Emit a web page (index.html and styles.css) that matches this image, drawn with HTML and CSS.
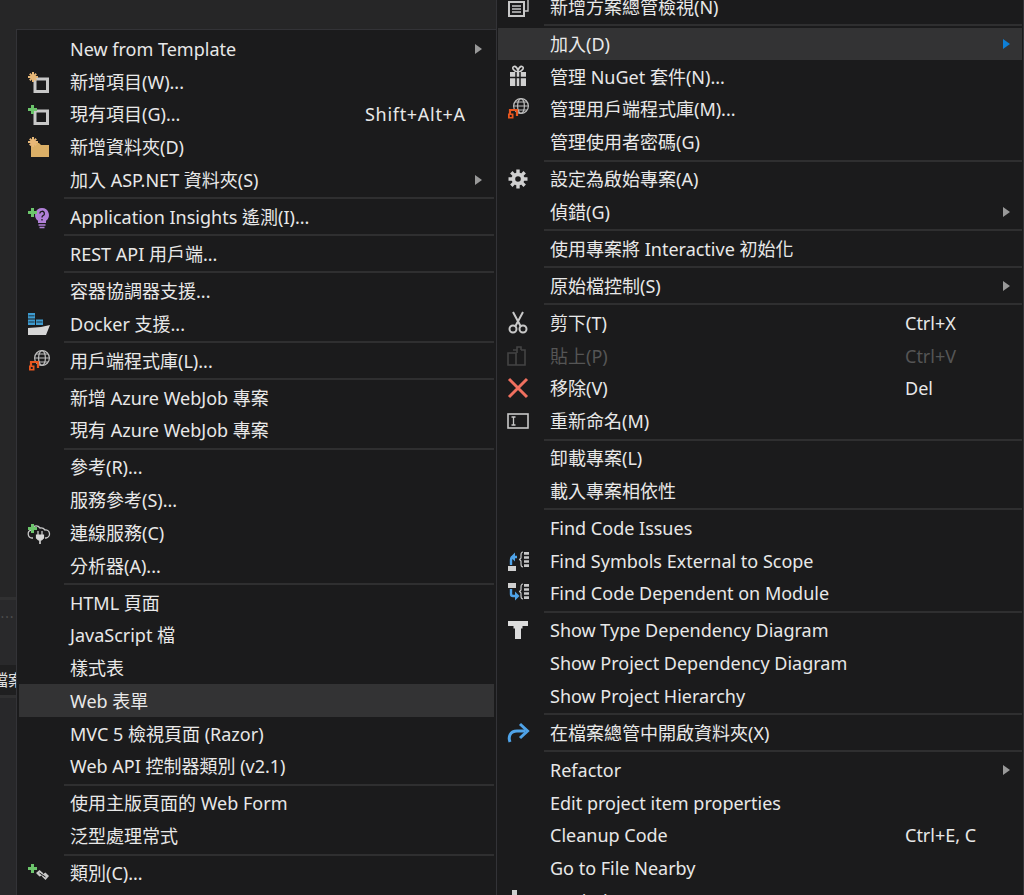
FILE: index.html
```html
<!DOCTYPE html>
<html lang="zh-Hant">
<head>
<meta charset="utf-8">
<title>Context menu</title>
<link rel="stylesheet" href="styles.css">
</head>
<body>
<svg class="defs" width="0" height="0" aria-hidden="true">
  <defs>
    <symbol id="star" viewBox="0 0 24 24">
      <g stroke="#e8b878" stroke-width="2"><path d="M6 2v10M1 7h10M2.800 3.800l6.400 6.400M9.200 3.800l-6.400 6.400"/></g>
    </symbol>
    <symbol id="plus" viewBox="0 0 24 24">
      <path d="M5.500 3v9M1 7.500h9" stroke="#6cc56c" stroke-width="3"/>
    </symbol>
    <symbol id="box" viewBox="0 0 24 24">
      <rect x="8" y="9" width="12.500" height="12.500" fill="#1b1b1c" stroke="#c8c8c8" stroke-width="3"/>
    </symbol>
    <symbol id="globe" viewBox="0 0 24 24">
      <g fill="none" stroke="#bdbdbd" stroke-width="1.200">
        <circle cx="15" cy="9" r="7.400"/>
        <ellipse cx="15" cy="9" rx="3.400" ry="7.400"/>
        <path d="M7.600 9h14.800M9 5h12M9 13h12"/>
      </g>
      <path d="M4 20V13h7v6" fill="none" stroke="#e8571f" stroke-width="2.200"/>
      <rect x="2" y="16.500" width="5.500" height="5" fill="#e8571f"/>
      <rect x="3.800" y="18" width="1.900" height="2" fill="#1b1b1c"/>
    </symbol>
    <symbol id="listb" viewBox="0 0 24 24">
      <path d="M17 3c-2 0-2 1-2 3v3l-1.400 1.500L15 12v3c0 2 0 3 2 3" fill="none" stroke="#c8c8c8" stroke-width="1.200"/>
      <rect x="18" y="3" width="5" height="15" fill="#c8c8c8"/>
      <path d="M18 6.500h5M18 10.500h5M18 14.500h5" stroke="#1b1b1c" stroke-width="1.400"/>
    </symbol>
  </defs>
</svg>

<div class="backdrop">
  <div class="strip">
    <div class="band band-a"></div>
    <div class="band band-line"></div>
    <div class="band band-b"><span class="grip">⋯</span></div>
    <div class="band band-c"><span class="tab-text">檔案</span></div>
    <div class="band band-d"></div>
  </div>
</div>

<div class="menu menu-left">
  <div class="row"><span class="ico"></span><span class="label">New from Template</span><span class="keys"></span><span class="sub"><i class="arrow"></i></span></div>
  <div class="row"><svg class="ico" viewBox="0 0 24 24"><use href="#box"/><use href="#star"/></svg><span class="label">新增項目(W)...</span><span class="keys"></span><span class="sub"></span></div>
  <div class="row"><svg class="ico" viewBox="0 0 24 24"><use href="#box"/><use href="#plus"/></svg><span class="label">現有項目(G)...</span><span class="keys">Shift+Alt+A</span><span class="sub"></span></div>
  <div class="row"><svg class="ico" viewBox="0 0 24 24"><path d="M4 8h8l2 2h8v12H4z" fill="#dcb067"/><use href="#star"/></svg><span class="label">新增資料夾(D)</span><span class="keys"></span><span class="sub"></span></div>
  <div class="row"><span class="ico"></span><span class="label">加入 ASP.NET 資料夾(S)</span><span class="keys"></span><span class="sub"><i class="arrow"></i></span></div>
  <div class="sep"></div>
  <div class="row"><svg class="ico" viewBox="0 0 24 24"><path d="M15 3a7 7 0 0 0-4 12.700V18h8v-2.300A7 7 0 0 0 15 3z" fill="#b180d7"/><path d="M12.800 8.500a2.300 2.300 0 1 1 3.200 2.200c-.8.400-1 .9-1 1.800M15 14v1.500" fill="none" stroke="#1b1b1c" stroke-width="1.300"/><path d="M11.500 20h7M12.500 22.500h5" stroke="#b180d7" stroke-width="1.600"/><use href="#plus"/></svg><span class="label">Application Insights 遙測(I)...</span><span class="keys"></span><span class="sub"></span></div>
  <div class="sep"></div>
  <div class="row"><span class="ico"></span><span class="label">REST API 用戶端...</span><span class="keys"></span><span class="sub"></span></div>
  <div class="sep"></div>
  <div class="row"><span class="ico"></span><span class="label">容器協調器支援...</span><span class="keys"></span><span class="sub"></span></div>
  <div class="row"><svg class="ico" viewBox="0 0 24 24"><path d="M1 1h7v5.500H1zM1 7.500h7V13H1zM9 7.500h7V13H9z" fill="#3d9bd0"/><path d="M1.500 3.800h6M1.500 10h6M9.500 10h6" stroke="#1b1b1c" stroke-width=".8"/><path d="M1 16l7-.5 6-.5 9-2-4 10H1z" fill="#d6d6d6"/></svg><span class="label">Docker 支援...</span><span class="keys"></span><span class="sub"></span></div>
  <div class="sep"></div>
  <div class="row"><svg class="ico" viewBox="0 0 24 24"><use href="#globe"/></svg><span class="label">用戶端程式庫(L)...</span><span class="keys"></span><span class="sub"></span></div>
  <div class="sep"></div>
  <div class="row"><span class="ico"></span><span class="label">新增 Azure WebJob 專案</span><span class="keys"></span><span class="sub"></span></div>
  <div class="row"><span class="ico"></span><span class="label">現有 Azure WebJob 專案</span><span class="keys"></span><span class="sub"></span></div>
  <div class="sep"></div>
  <div class="row"><span class="ico"></span><span class="label">參考(R)...</span><span class="keys"></span><span class="sub"></span></div>
  <div class="row"><span class="ico"></span><span class="label">服務參考(S)...</span><span class="keys"></span><span class="sub"></span></div>
  <div class="row"><svg class="ico" viewBox="0 0 24 24"><path d="M6 17H5a4 4 0 0 1-1-7.800A5 5 0 0 1 13 7a5 5 0 0 1 5 2a4 4 0 0 1 1 8h-1" fill="none" stroke="#c8c8c8" stroke-width="1.300"/><path d="M11 10v4M15 10v4M9.500 14h7v3l-2 2h-3l-2-2z" fill="#d8d8d8" stroke="#d8d8d8" stroke-width="1.200"/><path d="M13 19v4" stroke="#d8d8d8" stroke-width="1.600"/><use href="#plus"/></svg><span class="label">連線服務(C)</span><span class="keys"></span><span class="sub"></span></div>
  <div class="row"><span class="ico"></span><span class="label">分析器(A)...</span><span class="keys"></span><span class="sub"></span></div>
  <div class="sep"></div>
  <div class="row"><span class="ico"></span><span class="label">HTML 頁面</span><span class="keys"></span><span class="sub"></span></div>
  <div class="row"><span class="ico"></span><span class="label">JavaScript 檔</span><span class="keys"></span><span class="sub"></span></div>
  <div class="row"><span class="ico"></span><span class="label">樣式表</span><span class="keys"></span><span class="sub"></span></div>
  <div class="row row-hot"><span class="ico"></span><span class="label">Web 表單</span><span class="keys"></span><span class="sub"></span></div>
  <div class="row"><span class="ico"></span><span class="label">MVC 5 檢視頁面 (Razor)</span><span class="keys"></span><span class="sub"></span></div>
  <div class="row"><span class="ico"></span><span class="label">Web API 控制器類別 (v2.1)</span><span class="keys"></span><span class="sub"></span></div>
  <div class="sep"></div>
  <div class="row"><span class="ico"></span><span class="label">使用主版頁面的 Web Form</span><span class="keys"></span><span class="sub"></span></div>
  <div class="row"><span class="ico"></span><span class="label">泛型處理常式</span><span class="keys"></span><span class="sub"></span></div>
  <div class="sep"></div>
  <div class="row"><svg class="ico" viewBox="0 0 24 24"><path d="M9 12l3.500-3 3.500 3v1l2.500-1.500L22 15l-3.500 4-3.500-3.500v-1l-2.500 1z" fill="#c8c8c8"/><path d="M12.500 12l6 4" stroke="#1b1b1c" stroke-width="1"/><use href="#plus"/></svg><span class="label">類別(C)...</span><span class="keys"></span><span class="sub"></span></div>
</div>

<div class="menu menu-right">
  <div class="row"><svg class="ico" viewBox="0 0 24 24"><path d="M18 4h4v12h-4" fill="none" stroke="#c8c8c8" stroke-width="1.400"/><rect x="3" y="7" width="15" height="14" fill="none" stroke="#c8c8c8" stroke-width="2"/><path d="M6 11h9M6 14h9M6 17h9" stroke="#c8c8c8" stroke-width="1.500"/></svg><span class="label">新增方案總管檢視(N)</span><span class="keys"></span><span class="sub"></span></div>
  <div class="sep"></div>
  <div class="row row-hot"><span class="ico"></span><span class="label">加入(D)</span><span class="keys"></span><span class="sub"><i class="arrow arrow-hot"></i></span></div>
  <div class="row"><svg class="ico" viewBox="0 0 24 24"><path d="M8 1.500c-3 1 0 5 4 5.500 4-.5 7-4.500 4-5.500-2-.6-3 1-4 4-1-3-2-4.600-4-4z" fill="none" stroke="#d0d0d0" stroke-width="1.600"/><rect x="4" y="7" width="16" height="14" fill="#d0d0d0"/><path d="M4 12.500h16M10 7v14M14 7v14" stroke="#1b1b1c" stroke-width="1.500"/></svg><span class="label">管理 NuGet 套件(N)...</span><span class="keys"></span><span class="sub"></span></div>
  <div class="row"><svg class="ico" viewBox="0 0 24 24"><use href="#globe"/></svg><span class="label">管理用戶端程式庫(M)...</span><span class="keys"></span><span class="sub"></span></div>
  <div class="row"><span class="ico"></span><span class="label">管理使用者密碼(G)</span><span class="keys"></span><span class="sub"></span></div>
  <div class="sep"></div>
  <div class="row"><svg class="ico" viewBox="0 0 24 24"><path d="M12 5.500a6.500 6.500 0 1 0 0 13 6.500 6.500 0 0 0 0-13zm0 3.700a2.800 2.800 0 1 1 0 5.600 2.800 2.800 0 0 1 0-5.600z" fill="#d0d0d0" fill-rule="evenodd"/><path d="M12 2.500v4M12 17.500v4M2.500 12h4M17.500 12h4M5.300 5.300l2.800 2.800M15.900 15.900l2.800 2.800M18.700 5.300l-2.800 2.800M8.100 15.900l-2.800 2.800" stroke="#d0d0d0" stroke-width="3.400"/></svg><span class="label">設定為啟始專案(A)</span><span class="keys"></span><span class="sub"></span></div>
  <div class="row"><span class="ico"></span><span class="label">偵錯(G)</span><span class="keys"></span><span class="sub"><i class="arrow"></i></span></div>
  <div class="sep"></div>
  <div class="row"><span class="ico"></span><span class="label">使用專案將 Interactive 初始化</span><span class="keys"></span><span class="sub"></span></div>
  <div class="sep"></div>
  <div class="row"><span class="ico"></span><span class="label">原始檔控制(S)</span><span class="keys"></span><span class="sub"><i class="arrow"></i></span></div>
  <div class="sep"></div>
  <div class="row"><svg class="ico" viewBox="0 0 24 24"><g fill="none" stroke="#c8c8c8"><path d="M7 1l7.500 14M17 1L9.500 15" stroke-width="2"/><circle cx="7" cy="18" r="3.500" stroke-width="2"/><circle cx="17" cy="18" r="3.500" stroke-width="2"/></g></svg><span class="label">剪下(T)</span><span class="keys">Ctrl+X</span><span class="sub"></span></div>
  <div class="row row-off"><svg class="ico" viewBox="0 0 24 24"><path d="M2 9h8v12H2zM10 21h9V6h-4M7 6h4M11 9V3h4v3" fill="none" stroke="#444" stroke-width="1.600"/></svg><span class="label">貼上(P)</span><span class="keys">Ctrl+V</span><span class="sub"></span></div>
  <div class="row"><svg class="ico" viewBox="0 0 24 24"><path d="M3 3l18 18M21 3L3 21" stroke="#f0705f" stroke-width="3"/></svg><span class="label">移除(V)</span><span class="keys">Del</span><span class="sub"></span></div>
  <div class="row"><svg class="ico" viewBox="0 0 24 24"><rect x="2" y="5" width="20" height="14" fill="none" stroke="#c8c8c8" stroke-width="1.600"/><path d="M5.500 8h4M5.500 16h4M7.500 8v8" stroke="#c8c8c8" stroke-width="1.300"/></svg><span class="label">重新命名(M)</span><span class="keys"></span><span class="sub"></span></div>
  <div class="sep"></div>
  <div class="row"><span class="ico"></span><span class="label">卸載專案(L)</span><span class="keys"></span><span class="sub"></span></div>
  <div class="row"><span class="ico"></span><span class="label">載入專案相依性</span><span class="keys"></span><span class="sub"></span></div>
  <div class="sep"></div>
  <div class="row"><span class="ico"></span><span class="label">Find Code Issues</span><span class="keys"></span><span class="sub"></span></div>
  <div class="row"><svg class="ico" viewBox="0 0 24 24"><rect x="2" y="17" width="8" height="5" fill="#d0d0d0"/><path d="M11 8H8c-2 0-3 1-3 3v5" fill="none" stroke="#4fa3e8" stroke-width="2.400"/><path d="M9 3.500L4.500 8 9 12.500z" fill="#4fa3e8"/><use href="#listb"/></svg><span class="label">Find Symbols External to Scope</span><span class="keys"></span><span class="sub"></span></div>
  <div class="row"><svg class="ico" viewBox="0 0 24 24"><rect x="2" y="2" width="8" height="5" fill="#d0d0d0"/><path d="M5 8v5c0 1 1 2 2 2h3" fill="none" stroke="#4fa3e8" stroke-width="2.400"/><path d="M9 10.500l4.500 4.500L9 19.500z" fill="#4fa3e8"/><use href="#listb"/></svg><span class="label">Find Code Dependent on Module</span><span class="keys"></span><span class="sub"></span></div>
  <div class="sep"></div>
  <div class="row"><svg class="ico" viewBox="0 0 24 24"><path d="M2 3h20v5h-5.500v2.500H15V21H9V10.500H7.500V8H2z" fill="#dcdcdc"/></svg><span class="label">Show Type Dependency Diagram</span><span class="keys"></span><span class="sub"></span></div>
  <div class="row"><span class="ico"></span><span class="label">Show Project Dependency Diagram</span><span class="keys"></span><span class="sub"></span></div>
  <div class="row"><span class="ico"></span><span class="label">Show Project Hierarchy</span><span class="keys"></span><span class="sub"></span></div>
  <div class="sep"></div>
  <div class="row"><svg class="ico" viewBox="0 0 24 24"><path d="M4 21c-2-5 0-11 7-11h8" fill="none" stroke="#4fa3e8" stroke-width="3"/><path d="M14 3l7.500 7L14 17" fill="none" stroke="#4fa3e8" stroke-width="3"/></svg><span class="label">在檔案總管中開啟資料夾(X)</span><span class="keys"></span><span class="sub"></span></div>
  <div class="sep"></div>
  <div class="row"><span class="ico"></span><span class="label">Refactor</span><span class="keys"></span><span class="sub"><i class="arrow"></i></span></div>
  <div class="row"><span class="ico"></span><span class="label">Edit project item properties</span><span class="keys"></span><span class="sub"></span></div>
  <div class="row"><span class="ico"></span><span class="label">Cleanup Code</span><span class="keys">Ctrl+E, C</span><span class="sub"></span></div>
  <div class="row"><span class="ico"></span><span class="label">Go to File Nearby</span><span class="keys"></span><span class="sub"></span></div>
  <div class="row"><svg class="ico" viewBox="0 0 24 24"><rect x="6" y="1" width="5" height="6" fill="#d0d0d0"/></svg><span class="label">Optimize Imports</span><span class="keys"></span><span class="sub"></span></div>
</div>
</body>
</html>
```
FILE: styles.css
```css
html, body {
  margin: 0;
  padding: 0;
  width: 1024px;
  height: 895px;
  overflow: hidden;
  background: #262627;
}
body {
  position: relative;
  font-family: "Noto Sans", "Noto Sans CJK TC", sans-serif;
  font-size: 18px;
  color: #e8e8e8;
}
.defs { position: absolute; }
.backdrop { height: 895px; }
.strip {
  width: 16px;
  height: 895px;
  display: flex;
  flex-direction: column;
  overflow: hidden;
}
.band-a { height: 597px; background: #262627; flex: none; }
.band-line { height: 3px; background: #303031; flex: none; }
.band-b { height: 65px; background: #29292b; flex: none; color: #555; font-size: 14px; line-height: 34px; }
.band-c { height: 30px; background: #1f1f20; flex: none; white-space: nowrap; line-height: 30px; font-size: 16px; color: #e0e0e0; }
.band-d { flex: 1; background: #28282a; border-top: 3px solid #303031; }
.tab-text { margin-left: -8px; }
.grip { letter-spacing: 1px; }

.menu {
  position: absolute;
  box-sizing: border-box;
  background: #1b1b1c;
  border: 1px solid #333337;
  padding: 2.600px 2px;
}
.menu-left { left: 16px; top: 29px; width: 481px; height: 880px; }
.menu-right { left: 496px; top: -12px; width: 528px; height: 930px; padding-left: 1px; padding-right: 1px; border-top: 0; }

.row {
  display: flex;
  align-items: center;
  height: 32.730px;
  line-height: 24px;
  white-space: nowrap;
}
.row-hot { background: #333334; }
.row-off { color: #555; }
.ico { flex: none; width: 24px; height: 24px; margin-left: 8px; margin-right: 19px; }
.menu-right .ico { margin-right: 20px; }
.label { flex: 1; min-width: 0; }
.keys { flex: none; width: 110px; letter-spacing: .7px; }
.sub { flex: none; width: 19px; display: flex; align-items: center; }
.menu-right .keys { width: 98px; letter-spacing: 0; }
.arrow {
  display: block;
  width: 0;
  height: 0;
  border-left: 7px solid #999;
  border-top: 5.500px solid transparent;
  border-bottom: 5.500px solid transparent;
}
.arrow-hot { border-left-color: #0e7fd6; }
.sep {
  height: 2px;
  margin: 1.170px 0 1.170px 45px;
  background: #2f2f30;
}
.menu-right .sep { margin-left: 46px; }
```
